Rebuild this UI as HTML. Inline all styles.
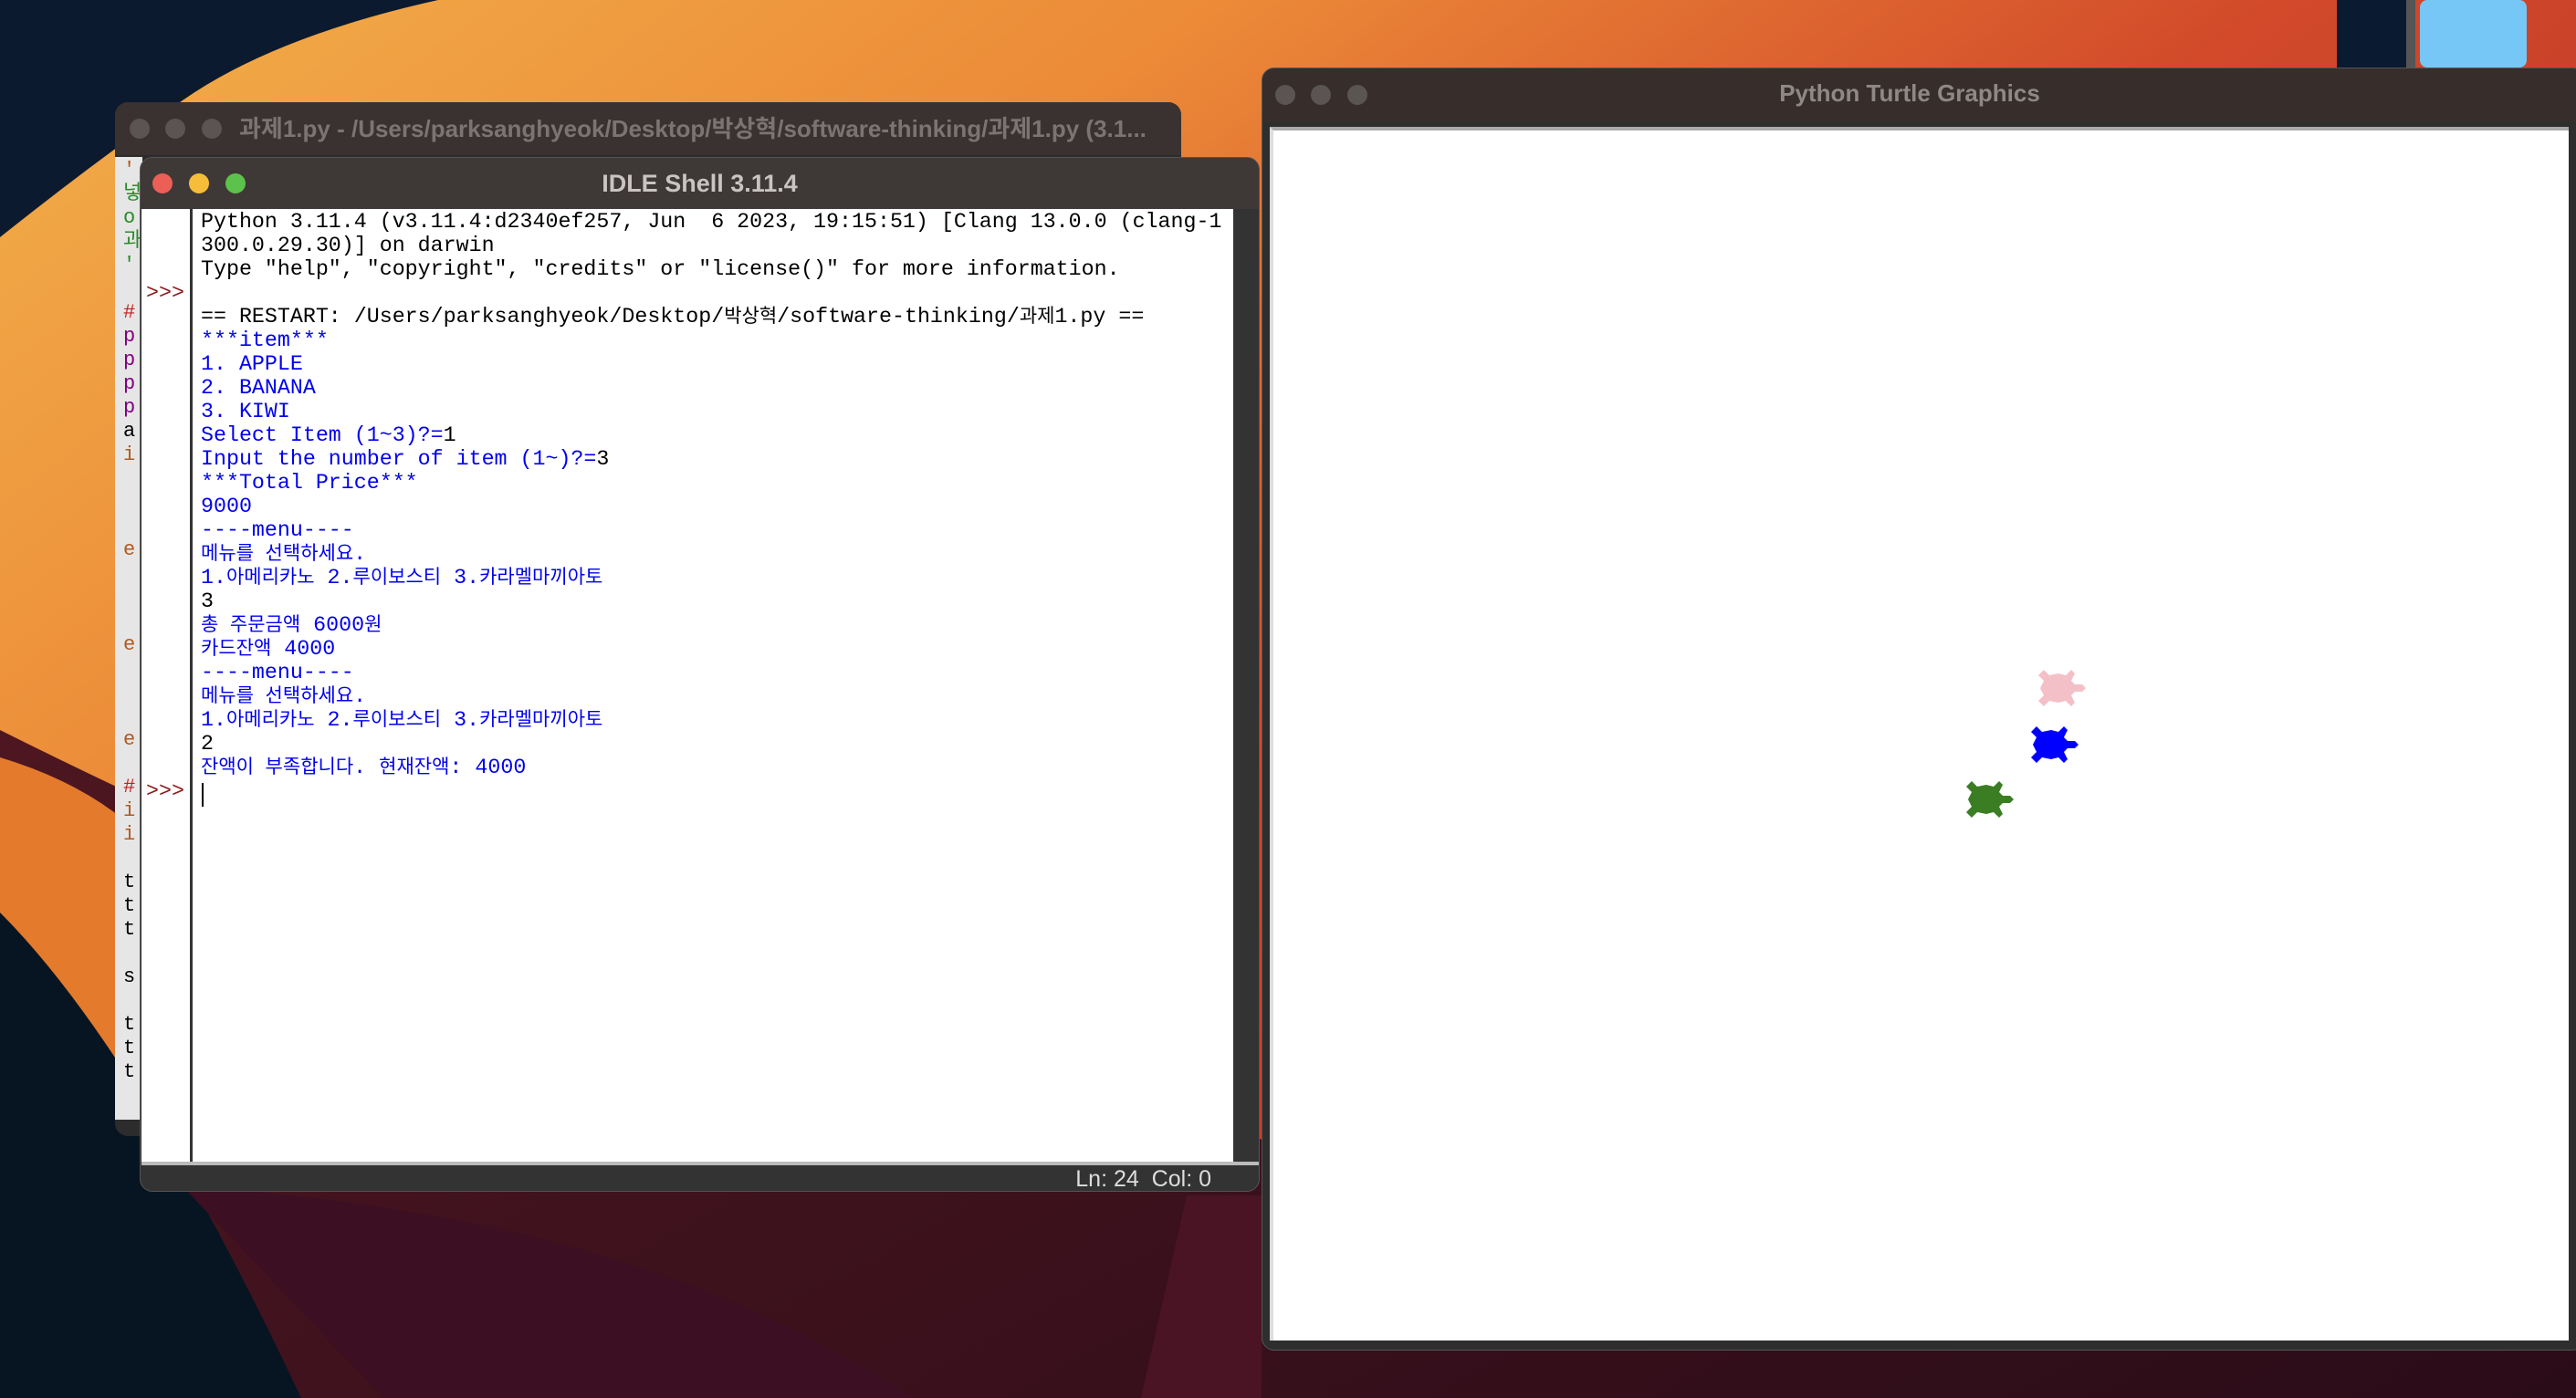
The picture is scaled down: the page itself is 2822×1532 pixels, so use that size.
<!DOCTYPE html>
<html><head><meta charset="utf-8"><style>
*{margin:0;padding:0;box-sizing:border-box}
body{width:2822px;height:1532px;overflow:hidden;position:relative;font-family:"Liberation Sans","Noto Sans CJK KR",sans-serif;background:#2a0e1c}
.bg1{position:absolute;left:0;top:0;width:2822px;height:1532px}
.win{position:absolute;border-radius:14px;overflow:hidden}
.tb{position:absolute;left:0;right:0;top:0;color:#a9a3a0;font-weight:bold;text-align:center;white-space:nowrap}
.dot{position:absolute;width:22px;height:22px;border-radius:50%}
.mono{font-family:"Liberation Mono","Noto Sans CJK KR",monospace;font-size:23.3px;line-height:26px;white-space:pre}
.mono.L{white-space:normal}
.L div{height:26px;line-height:26px;overflow:visible;white-space:pre}
.b{color:#0000ee}.k{font-size:21px;line-height:1px}
.g{color:#8b1a1a}
</style></head><body>
<svg class="bg1" width="2822" height="1532">
<defs>
<linearGradient id="g1" x1="0" y1="0" x2="1" y2="0.6"><stop offset="0" stop-color="#f2b04a"/><stop offset=".35" stop-color="#ec8a38"/><stop offset=".65" stop-color="#d24a2a"/><stop offset="1" stop-color="#b83228"/></linearGradient>
<linearGradient id="g2" x1="0" y1="0" x2="1" y2="1"><stop offset="0" stop-color="#5a1a24"/><stop offset="1" stop-color="#2a0c18"/></linearGradient>
</defs>
<rect width="2822" height="1532" fill="url(#g2)"/>
<path d="M0 0 L2822 0 L2822 1100 Q2000 1200 1400 1250 Q800 1200 0 800 Z" fill="url(#g1)"/>
<path d="M0 0 L480 0 Q300 40 200 110 Q100 180 0 260 Z" fill="#0b1a2e"/>
<path d="M0 830 Q100 860 160 920 L160 1300 L0 1300 Z" fill="#e47a2c"/>
<path d="M0 1000 Q150 1150 330 1532 L0 1532 Z" fill="#071522"/>
<path d="M200 1300 Q700 1330 1000 1532 L420 1532 Z" fill="#3c0f22"/>
<path d="M1300 1310 L1382 1310 L1382 1532 L1250 1532 Z" fill="#4a1424"/>
<rect x="2560" y="0" width="80" height="74" fill="#0a1a30"/>
<rect x="2636" y="0" width="10" height="74" fill="#555"/>
<rect x="2651" y="0" width="117" height="74" rx="8" fill="#76c6f6"/>
</svg>

<!-- editor window (back) -->
<div class="win" style="left:126px;top:112px;width:1168px;height:1133px;background:#2c2c2c">
 <div class="tb" style="height:58px;background:#3a3230;font-size:26px;line-height:58px;text-align:left;padding-left:136px;color:#7a7472;overflow:hidden">과제1.py - /Users/parksanghyeok/Desktop/박상혁/software-thinking/과제1.py (3.1...</div>
 <div class="dot" style="left:16px;top:18px;background:#5a5452"></div>
 <div class="dot" style="left:55px;top:18px;background:#5a5452"></div>
 <div class="dot" style="left:95px;top:18px;background:#5a5452"></div>
 <div style="position:absolute;left:0;top:60px;width:30px;height:1055px;background:#e6e6e6"></div>
 <div class="mono" style="position:absolute;left:9px;top:62px;line-height:26px;font-size:22px;color:#b05a20">'
<span style="color:#2a8a2a">넣</span>
<span style="color:#2a8a2a">o</span>
<span style="color:#2a8a2a">과</span>
<span style="color:#2a8a2a">'</span>

<span style="color:#c02020">#</span>
<span style="color:#800080">p</span>
<span style="color:#800080">p</span>
<span style="color:#800080">p</span>
<span style="color:#800080">p</span>
<span style="color:#000">a</span>
i



e



e



e

<span style="color:#c02020">#</span>
i
i

<span style="color:#000">t</span>
<span style="color:#000">t</span>
<span style="color:#000">t</span>

<span style="color:#000">s</span>

<span style="color:#000">t</span>
<span style="color:#000">t</span>
<span style="color:#000">t</span></div>
</div>

<!-- IDLE shell -->
<div class="win" style="left:153px;top:172px;width:1227px;height:1134px;background:#333;border:1px solid #555">
 <div class="tb" style="height:56px;background:#3e3836;font-size:27px;line-height:56px;color:#c9c4c2">IDLE Shell 3.11.4</div>
 <div class="dot" style="left:13px;top:17px;background:#ec5f57"></div>
 <div class="dot" style="left:53px;top:17px;background:#f6bd3b"></div>
 <div class="dot" style="left:93px;top:17px;background:#5dc24b"></div>
 <div style="position:absolute;left:1px;top:56px;width:1196px;height:1044px;background:#fff"></div>
 <div style="position:absolute;left:54px;top:56px;width:3px;height:1044px;background:#333"></div>
 <div style="position:absolute;left:1px;top:1100px;width:1225px;height:4px;background:#bbb"></div>
 <div class="mono g" style="position:absolute;left:6px;top:57px">


>>>




















>>></div>
 <div class="mono L" style="position:absolute;left:66px;top:57px;color:#000"><div>Python 3.11.4 (v3.11.4:d2340ef257, Jun  6 2023, 19:15:51) [Clang 13.0.0 (clang-1</div><div>300.0.29.30)] on darwin</div><div>Type "help", "copyright", "credits" or "license()" for more information.</div><div></div><div>== RESTART: /Users/parksanghyeok/Desktop/<span class="k">박상혁</span>/software-thinking/<span class="k">과제</span>1.py ==</div><div class="b">***item***</div><div class="b">1. APPLE</div><div class="b">2. BANANA</div><div class="b">3. KIWI</div><div><span class="b">Select Item (1~3)?=</span>1</div><div><span class="b">Input the number of item (1~)?=</span>3</div><div class="b">***Total Price***</div><div class="b">9000</div><div class="b">----menu----</div><div class="b"><span class="k">메뉴를 선택하세요</span>.</div><div class="b">1.<span class="k">아메리카노</span> 2.<span class="k">루이보스티</span> 3.<span class="k">카라멜마끼아토</span></div><div>3</div><div class="b"><span class="k">총 주문금액</span> 6000<span class="k">원</span></div><div class="b"><span class="k">카드잔액</span> 4000</div><div class="b">----menu----</div><div class="b"><span class="k">메뉴를 선택하세요</span>.</div><div class="b">1.<span class="k">아메리카노</span> 2.<span class="k">루이보스티</span> 3.<span class="k">카라멜마끼아토</span></div><div>2</div><div class="b"><span class="k">잔액이 부족합니다</span>. <span class="k">현재잔액</span>: 4000</div></div>
 <div style="position:absolute;left:67px;top:685px;width:2px;height:26px;background:#000"></div>
 <div style="position:absolute;right:52px;top:1104px;height:30px;line-height:30px;font-size:25px;color:#ddd">Ln: 24&nbsp;&nbsp;Col: 0</div>
</div>

<!-- turtle window -->
<div class="win" style="left:1382px;top:74px;width:1450px;height:1406px;background:#2e2e2e;border:1px solid #555">
 <div class="tb" style="height:58px;background:#372d2b;font-size:26px;line-height:54px;padding-right:30px;color:#8f8886">Python Turtle Graphics</div>
 <div class="dot" style="left:14px;top:18px;background:#5a5452"></div>
 <div class="dot" style="left:53px;top:18px;background:#5a5452"></div>
 <div class="dot" style="left:93px;top:18px;background:#5a5452"></div>
 <div style="position:absolute;left:8px;top:64px;width:1423px;height:1330px;background:#fff;border-top:4px solid #aaa;border-left:4px solid #ddd"></div>
 <svg style="position:absolute;left:0;top:0" width="1450" height="1406">
  <defs><path id="t" d="M-22 -14 L-16 -20 L-10 -14 L0 -16 L8 -14 L14 -20 L18 -16 L14 -8 L18 -4 L26 -4 L30 0 L26 4 L18 4 L14 8 L18 16 L14 20 L8 14 L0 16 L-10 14 L-16 20 L-22 14 L-16 8 L-20 0 L-16 -8 Z"/></defs>
  <use href="#t" x="872" y="679" fill="#f4c0c8"/>
  <use href="#t" x="864" y="741" fill="#0000ff"/>
  <use href="#t" x="793" y="801" fill="#3a7d22"/>
 </svg>
</div>
</body></html>
